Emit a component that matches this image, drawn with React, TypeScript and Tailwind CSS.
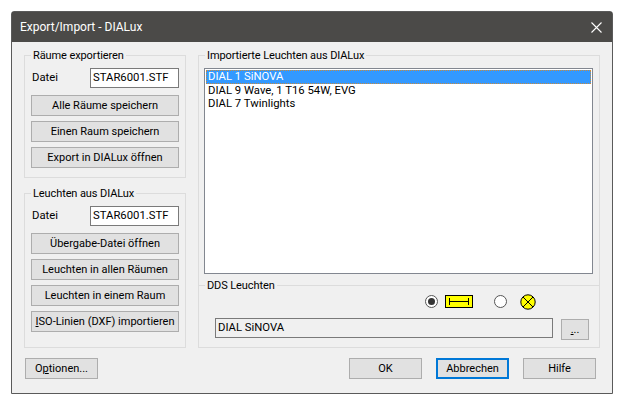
function Btn({ children, className = 'border border-[#adadad]' }: { children: React.ReactNode; className?: string }) {
  return (
    <button className={`h-[21px] bg-[#e1e1e1] text-[11px] leading-none text-black whitespace-nowrap flex items-center justify-center ${className}`}>
      {children}
    </button>
  )
}

function Legend({ children }: { children: React.ReactNode }) {
  return <span className="absolute left-[6px] top-[-8px] bg-[#f0f0f0] px-[2px] text-[11px] tracking-[-0.1px] leading-[16px] text-black">{children}</span>
}

function FileGroup({ title, buttons, height }: { title: string; buttons: React.ReactNode[]; height: string }) {
  return (
    <div className={`relative border border-[#dcdcdc] px-[6px] pt-[12px] ${height}`}>
      <Legend>{title}</Legend>
      <div className="flex items-center justify-between mb-[7px]">
        <span className="text-[11.3px] pl-px">Datei</span>
        <div className="w-[89px] h-[20px] bg-white border border-[#7a7a7a] text-[11.3px] leading-[18px] px-[2px]">STAR6001.STF</div>
      </div>
      <div className="flex flex-col gap-[5px]">
        {buttons.map((b, i) => (
          <Btn key={i} className="w-[148px] border border-[#adadad]">{b}</Btn>
        ))}
      </div>
    </div>
  )
}

export default function App() {
  return (
    <div className="w-[625px] h-[406px] bg-white pt-[11px] pl-[11px] font-['Roboto',sans-serif] text-black overflow-hidden">
      <div className="w-[602px] h-[383px] border border-[#5a5a5a] rounded-t-[3px] bg-[#f0f0f0] flex flex-col">
        <div className="h-[30px] bg-[#4b4a48] flex items-center justify-between pl-[8px] pr-[10px] text-white text-[12px]">
          <span>Export/Import - DIALux</span>
          <svg width="11" height="11" viewBox="0 0 11 11" stroke="#fff" strokeWidth="1.1" fill="none">
            <path d="M0.5 0.5L10.5 10.5M10.5 0.5L0.5 10.5" />
          </svg>
        </div>

        <div className="flex-1 px-[12px] pt-[13px] flex flex-col">
          <div className="flex gap-[12px]">
            <div className="w-[162px] flex flex-col gap-[15px]">
              <FileGroup
                title="Räume exportieren"
                height="h-[123px]"
                buttons={['Alle Räume speichern', 'Einen Raum speichern', 'Export in DIALux öffnen']}
              />
              <FileGroup
                title="Leuchten aus DIALux"
                height="h-[155px]"
                buttons={[
                  'Übergabe-Datei öffnen',
                  'Leuchten in allen Räumen',
                  'Leuchten in einem Raum',
                  <span><u>I</u>SO-Linien (DXF) importieren</span>,
                ]}
              />
            </div>

            <div className="relative w-[402px] h-[293px] border border-[#dcdcdc] flex flex-col">
              <Legend>Importierte Leuchten aus DIALux</Legend>
              <div className="mt-[12px] mx-[5px] h-[206px] w-[389px] bg-white border border-[#828790] p-[1px] text-[11.3px] leading-[13px]">
                <div className="h-[14px] bg-[#3399ff] text-white pl-[2px] outline-1 outline-dotted outline-offset-[-1px] outline-[#c98a3c]">DIAL 1 SiNOVA</div>
                <div className="pl-[2px]">DIAL 9 Wave, 1 T16 54W, EVG</div>
                <div className="pl-[2px]">DIAL 7 Twinlights</div>
              </div>

              <div className="relative mt-[11px] flex-1 border-t border-[#dcdcdc] pl-[16px] pr-[10px]">
                <Legend>DDS Leuchten</Legend>
                <div className="flex items-center h-[13px] mt-[9px] ml-[210px]">
                  <span className="w-[13px] h-[13px] rounded-full border border-[#555] bg-white flex items-center justify-center">
                    <span className="w-[7px] h-[7px] rounded-full bg-[#333]" />
                  </span>
                  <svg className="ml-[7px]" width="28" height="13" viewBox="0 0 28 13">
                    <rect x="0.5" y="0.5" width="27" height="12" fill="#ffff00" stroke="#000" />
                    <path d="M4.5 3V10M23.5 3V10M4.5 6.5H23.5" stroke="#000" fill="none" />
                  </svg>
                  <span className="ml-[21px] w-[13px] h-[13px] rounded-full border border-[#555] bg-white" />
                  <svg className="ml-[13px]" width="16" height="16" viewBox="0 0 16 16">
                    <circle cx="8" cy="8" r="7.2" fill="#ffff00" stroke="#000" />
                    <path d="M3 3L13 13M13 3L3 13" stroke="#000" fill="none" />
                  </svg>
                </div>
                <div className="flex items-start mt-[10px]">
                  <div className="w-[338px] h-[20px] shrink-0 border border-[#7a7a7a] text-[11.3px] leading-[18px] px-[2px]">DIAL SiNOVA</div>
                  <Btn className="ml-[8px] mt-px w-[28px] shrink-0 border border-[#adadad]"><span><u>.</u>..</span></Btn>
                </div>
              </div>
            </div>
          </div>

          <div className="flex mt-[10px] pl-px pr-[4px]">
            <Btn className="w-[73px] border border-[#adadad]"><span>O<u>p</u>tionen...</span></Btn>
            <div className="ml-auto flex gap-[14px]">
              <Btn className="w-[73px] border border-[#adadad]">OK</Btn>
              <Btn className="w-[73px] border-2 border-[#0078d7]">Abbrechen</Btn>
              <Btn className="w-[73px] border border-[#adadad]">Hilfe</Btn>
            </div>
          </div>
        </div>
      </div>
    </div>
  )
}
